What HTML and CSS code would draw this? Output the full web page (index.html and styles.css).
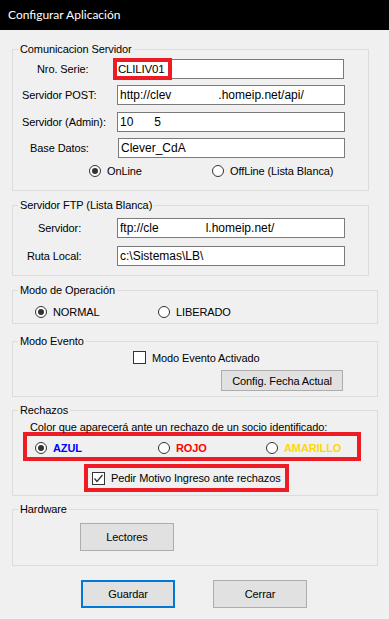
FILE: index.html
```html
<!DOCTYPE html>
<html lang="es">
<head>
<meta charset="utf-8">
<title>Configurar Aplicación</title>
<link rel="stylesheet" href="styles.css">
</head>
<body>
<div class="titlebar">Configurar Aplicación</div>
<div class="content">
  <fieldset class="grp g1">
    <legend>Comunicacion Servidor</legend>
    <div class="row r1">
      <span class="lbl l-serie">Nro. Serie:</span>
      <div class="field f-serie"><span>CLILIV01</span><span class="mark"></span></div>
    </div>
    <div class="row r2">
      <span class="lbl l-post">Servidor POST:</span>
      <div class="field f-std"><span>http://clev</span><span class="gap-post"></span><span>.homeip.net/api/</span></div>
    </div>
    <div class="row r3">
      <span class="lbl l-admin">Servidor (Admin):</span>
      <div class="field f-std"><span>10</span><span class="gap-admin"></span><span>5</span></div>
    </div>
    <div class="row r4">
      <span class="lbl l-base">Base Datos:</span>
      <div class="field f-base"><span>Clever_CdA</span></div>
    </div>
    <div class="opts opts-online">
      <label class="opt opt-online"><span class="radio on"></span>OnLine</label>
      <label class="opt"><span class="radio"></span>OffLine (Lista Blanca)</label>
    </div>
  </fieldset>

  <fieldset class="grp g2">
    <legend>Servidor FTP (Lista Blanca)</legend>
    <div class="row r5">
      <span class="lbl l-ftp">Servidor:</span>
      <div class="field f-std"><span>ftp://cle</span><span class="gap-ftp"></span><span>l.homeip.net/</span></div>
    </div>
    <div class="row r6">
      <span class="lbl l-ruta">Ruta Local:</span>
      <div class="field f-std"><span>c:\Sistemas\LB\</span></div>
    </div>
  </fieldset>

  <fieldset class="grp wide g3">
    <legend>Modo de Operación</legend>
    <div class="opts opts-modo">
      <label class="opt opt-a"><span class="radio on"></span>NORMAL</label>
      <label class="opt"><span class="radio"></span>LIBERADO</label>
    </div>
  </fieldset>

  <fieldset class="grp wide g4">
    <legend>Modo Evento</legend>
    <label class="chk chk-evento"><span class="box"></span>Modo Evento Activado</label>
    <button class="btn btn-fecha" type="button">Config. Fecha Actual</button>
  </fieldset>

  <fieldset class="grp wide g5">
    <legend>Rechazos</legend>
    <div class="hint">Color que aparecerá ante un rechazo de un socio identificado:</div>
    <div class="redbox colors">
      <label class="opt opt-a"><span class="radio on"></span><b class="azul">AZUL</b></label>
      <label class="opt opt-b"><span class="radio"></span><b class="rojo">ROJO</b></label>
      <label class="opt"><span class="radio"></span><b class="amarillo">AMARILLO</b></label>
    </div>
    <div class="redbox motivo">
      <label class="chk"><span class="box checked"><svg viewBox="0 0 13 13" width="13" height="13"><polyline points="2.5,6.5 5,9.5 10.5,3" fill="none" stroke="#333" stroke-width="1.3"/></svg></span>Pedir Motivo Ingreso ante rechazos</label>
    </div>
  </fieldset>

  <fieldset class="grp wide g6">
    <legend>Hardware</legend>
    <button class="btn btn-lectores" type="button">Lectores</button>
  </fieldset>

  <div class="actions">
    <button class="btn btn-main default" type="button">Guardar</button>
    <button class="btn btn-main" type="button">Cerrar</button>
  </div>
</div>
</body>
</html>
```

FILE: styles.css
```css
* { box-sizing: border-box; }
html, body { margin: 0; padding: 0; }
body {
  width: 389px;
  height: 619px;
  background: #f0f0f0;
  font-family: "Liberation Sans", Arial, sans-serif;
  font-size: 11px;
  letter-spacing: -0.1px;
  color: #000;
  overflow: hidden;
}
.titlebar {
  height: 30px;
  background: #000;
  color: #fff;
  font-family: Lato, "Noto Sans", sans-serif;
  font-size: 12px;
  letter-spacing: 0;
  line-height: 30px;
  padding-left: 8px;
}
.content {
  padding-left: 12px;
  display: flex;
  flex-direction: column;
  align-items: flex-start;
}
.grp {
  margin: 0;
  padding: 0;
  border: 1px solid #dcdcdc;
  min-width: 0;
  width: 357px;
}
.grp.wide { width: 366px; }
.grp legend {
  padding: 0 2px;
  margin-left: 5px;
  line-height: 14px;
  font-size: 11px;
}
.g1 { margin-top: 12px; padding-bottom: 12px; }
.g2 { margin-top: 7px; padding-bottom: 9px; }
.g3 { margin-top: 7px; padding-bottom: 4px; }
.g4 { margin-top: 10px; padding-bottom: 5px; }
.g5 { margin-top: 6px; padding-bottom: 3px; }
.g6 { margin-top: 6px; padding-bottom: 14px; }

.row { display: flex; align-items: center; height: 20px; }
.r1 { margin-top: 3px; }
.r2 { margin-top: 6px; }
.r3 { margin-top: 7px; }
.r4 { margin-top: 6px; }
.r5 { margin-top: 6px; }
.r6 { margin-top: 8px; }

.lbl { flex: none; white-space: nowrap; }
.l-serie { margin-left: 24px; width: 76px; }
.l-post  { margin-left: 9px;  width: 95px; }
.l-admin { margin-left: 9px;  width: 95px; }
.l-base  { margin-left: 17px; width: 88px; }
.l-ftp   { margin-left: 25px; width: 79px; }
.l-ruta  { margin-left: 14px; width: 90px; }

.field {
  position: relative;
  height: 20px;
  background: #fff;
  border: 1px solid #7a7a7a;
  display: flex;
  align-items: center;
  padding-left: 2px;
  white-space: pre;
  font-size: 12px;
  letter-spacing: 0;
}
.f-serie { width: 231px; padding-left: 4px; font-size: 11.5px; letter-spacing: -0.2px; }
.f-std { width: 228px; }
.f-base { width: 227px; }
.gap-post { width: 47px; }
.gap-admin { width: 21px; }
.gap-ftp { width: 47px; }
.mark {
  position: absolute;
  left: -1px;
  top: -2px;
  width: 59px;
  height: 22px;
  border: 4px solid #ed1c24;
}

.opts { display: flex; align-items: center; height: 14px; }
.opts-online { margin-top: 6px; margin-left: 76px; }
.opts-modo { margin-top: 8px; margin-left: 22px; }
.opt { display: flex; align-items: center; white-space: nowrap; }
.opt-online { width: 123px; }
.opt-a { width: 123px; }
.opt-b { width: 108px; }
.radio {
  flex: none;
  width: 12px;
  height: 12px;
  border: 1px solid #333;
  border-radius: 50%;
  background: #fff;
  margin-right: 6px;
  display: flex;
  align-items: center;
  justify-content: center;
}
.radio.on::after {
  content: "";
  width: 6px;
  height: 6px;
  border-radius: 50%;
  background: #333;
}

.chk { display: flex; align-items: center; white-space: nowrap; }
.box {
  flex: none;
  width: 13px;
  height: 13px;
  border: 1px solid #333;
  background: #fff;
  margin-right: 6px;
  display: flex;
}
.box svg { margin: -1px; }
.chk-evento { margin-top: 3px; margin-left: 120px; height: 13px; }

.btn {
  font-family: "Liberation Sans", Arial, sans-serif;
  font-size: 11px;
  letter-spacing: -0.1px;
  color: #000;
  background: #e1e1e1;
  border: 1px solid #adadad;
  padding: 0;
  margin: 0;
}
.btn-fecha { display: block; margin-top: 6px; margin-left: 208px; width: 122px; height: 21px; }
.btn-lectores { display: block; margin-top: 7px; margin-left: 67px; width: 94px; height: 28px; }

.hint { margin-top: 3px; padding-left: 17px; line-height: 14px; }
.redbox { border: 4px solid #ed1c24; }
.colors {
  margin-top: -2px;
  margin-left: 10px;
  width: 338px;
  height: 29px;
  display: flex;
  align-items: center;
  padding: 3px 0 0 8px;
}
.azul { color: #0000ff; }
.rojo { color: #ff0000; }
.amarillo { color: #ffd800; }
.motivo {
  margin-top: 3px;
  margin-left: 71px;
  width: 205px;
  height: 28px;
  display: flex;
  align-items: center;
  padding-left: 4px;
}

.actions { display: flex; gap: 38px; margin-top: 14px; margin-left: 69px; }
.btn-main { width: 94px; height: 28px; }
.btn-main.default { border: 2px solid #0078d7; }
```
